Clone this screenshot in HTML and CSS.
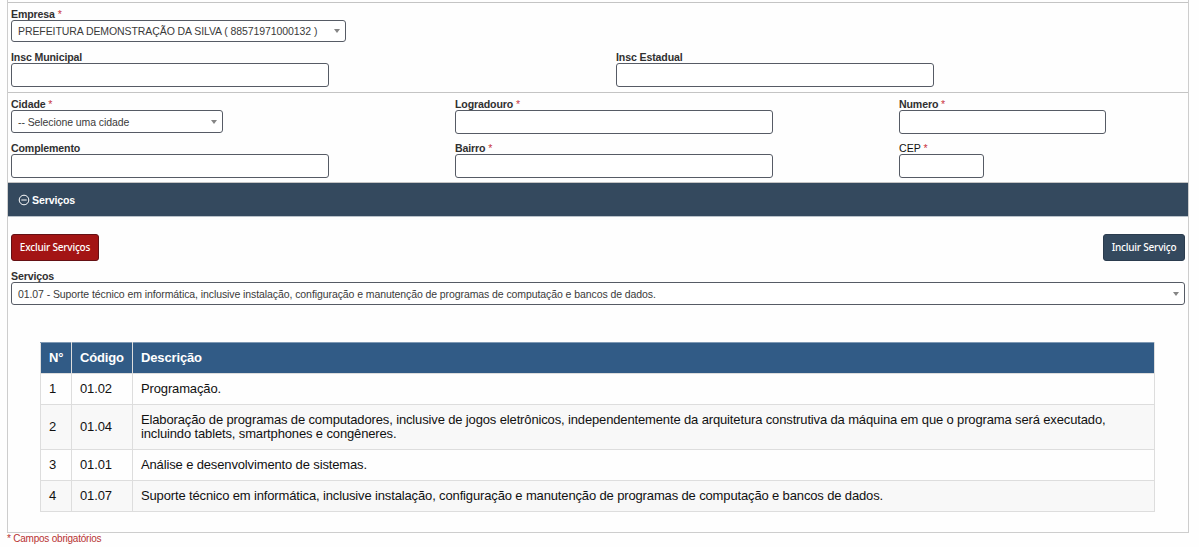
FILE: index.html
```html
<!DOCTYPE html>
<html lang="pt-BR">
<head>
<meta charset="utf-8">
<title>Serviços</title>
<link rel="stylesheet" href="styles.css">
</head>
<body>
<main class="panel">
  <section class="company">
    <div class="field company-name">
      <label class="label">Empresa <span class="req">*</span></label>
      <div class="select select-company"><span>PREFEITURA DEMONSTRAÇÃO DA SILVA ( 88571971000132 )</span><i class="arrow"></i></div>
    </div>
    <div class="halves">
      <div class="field"><label class="label">Insc Municipal</label><input class="input" type="text"></div>
      <div class="field"><label class="label">Insc Estadual</label><input class="input" type="text"></div>
    </div>
  </section>
  <section class="address">
    <div class="field"><label class="label">Cidade <span class="req">*</span></label>
      <div class="select select-city"><span>-- Selecione uma cidade</span><i class="arrow"></i></div></div>
    <div class="field"><label class="label">Logradouro <span class="req">*</span></label><input class="input" type="text"></div>
    <div class="field"><label class="label">Numero <span class="req">*</span></label><input class="input input-number" type="text"></div>
    <div class="field"><label class="label">Complemento</label><input class="input" type="text"></div>
    <div class="field"><label class="label">Bairro <span class="req">*</span></label><input class="input" type="text"></div>
    <div class="field"><label class="label label-light">CEP <span class="req">*</span></label><input class="input input-zip" type="text"></div>
  </section>
  <h2 class="section-title">
    <svg class="minus" viewBox="0 0 12 12"><circle cx="6" cy="6" r="4.8"/><path d="M3.3 6h5.4"/></svg>
    <span>Serviços</span>
  </h2>
  <section class="services">
    <div class="actions">
      <button class="btn btn-danger">Excluir Serviços</button>
      <button class="btn btn-primary">Incluir Serviço</button>
    </div>
    <div class="field service">
      <label class="label">Serviços</label>
      <div class="select"><span>01.07 - Suporte técnico em informática, inclusive instalação, configuração e manutenção de programas de computação e bancos de dados.</span><i class="arrow"></i></div>
    </div>
    <table class="table">
      <colgroup><col class="c-num"><col class="c-code"><col></colgroup>
      <thead><tr><th>N°</th><th>Código</th><th>Descrição</th></tr></thead>
      <tbody>
        <tr><td>1</td><td>01.02</td><td>Programação.</td></tr>
        <tr class="tall"><td>2</td><td>01.04</td><td>Elaboração de programas de computadores, inclusive de jogos eletrônicos, independentemente da arquitetura construtiva da máquina em que o programa será executado,<br>incluindo tablets, smartphones e congêneres.</td></tr>
        <tr><td>3</td><td>01.01</td><td>Análise e desenvolvimento de sistemas.</td></tr>
        <tr><td>4</td><td>01.07</td><td>Suporte técnico em informática, inclusive instalação, configuração e manutenção de programas de computação e bancos de dados.</td></tr>
      </tbody>
    </table>
  </section>
</main>
<p class="note">* Campos obrigatórios</p>
</body>
</html>
```

FILE: styles.css
```css
* { box-sizing: border-box; }
body {
  margin: 0;
  height: 547px;
  overflow: hidden;
  background: #fefefe;
  color: #333;
  font: 10.5px/12px "Liberation Sans", Arial, sans-serif;
}
.panel {
  width: 1182px;
  height: 533px;
  margin-left: 7px;
  padding-top: 2px;
  border: solid #cdcdcd;
  border-width: 0 1px 1px;
}
.company { height: 90px; padding: 5px 3px 0; border-top: 1px solid #c4c4c4; }
.company-name { height: 43px; }
.field { display: flex; flex-direction: column; align-items: flex-start; }
.label {
  height: 12px;
  color: #303030;
  font-weight: bold;
  font-size: 10.6px;
  letter-spacing: -0.13px;
  white-space: nowrap;
}
.label-light { font-weight: normal; color: #111; letter-spacing: 0; }
.req { color: #c9343d; font-weight: normal; }
.input {
  width: 318px;
  height: 24px;
  padding: 0 6px;
  border: 1px solid #565b65;
  border-radius: 3px;
  background: #fff;
}
.input-number { width: 207px; }
.input-zip { width: 85px; }
.select {
  display: flex;
  justify-content: space-between;
  align-items: center;
  width: 100%;
  height: 23px;
  padding: 0 5px 0 6px;
  border: 1px solid #565b65;
  border-radius: 3px;
  background: #fff;
  color: #3a3a3a;
  letter-spacing: -0.085px;
  white-space: nowrap;
}
.select-company { width: 335px; height: 22px; }
.select-city { width: 212px; }
.arrow { border: solid transparent; border-width: 4px 3px 0; border-top-color: #858585; }
.halves { display: grid; grid-template-columns: 605px 1fr; }
.address {
  display: grid;
  grid-template-columns: 444px 444px 1fr;
  grid-template-rows: 44px 40px;
  height: 91px;
  padding: 5px 3px 0;
  border: solid #c4c4c4;
  border-width: 1px 0;
}
.section-title {
  display: flex;
  align-items: center;
  gap: 2px;
  height: 34px;
  margin: 0;
  padding-left: 10px;
  border-bottom: 1px solid #b9c2ca;
  background: #34495e;
  color: #fff;
  font-size: 10.6px;
  letter-spacing: -0.13px;
}
.minus { width: 12px; height: 12px; fill: none; stroke: #fff; stroke-width: 1; }
.services { padding: 17px 3px 0; }
.actions { display: flex; justify-content: space-between; }
.btn {
  height: 27px;
  padding: 0 0 1px;
  border: 1px solid #2b3c4e;
  border-radius: 3px;
  color: #fff;
  font: 500 10px "Noto Sans", sans-serif;
  letter-spacing: -0.2px;
}
.btn-danger { width: 88px; background: #a31414; border-color: #651014; }
.btn-primary { width: 82px; background: #34495e; }
.service { margin-top: 9px; }
.table {
  width: 1115px;
  margin: 37px 0 0 29px;
  border-collapse: collapse;
  table-layout: fixed;
  color: #111;
  font-size: 13px;
  line-height: 14.5px;
  letter-spacing: -0.14px;
}
.c-num { width: 31px; }
.c-code { width: 61px; }
.table tr { height: 31px; }
.table .tall { height: 45px; }
.table th, .table td { padding: 0 8px; border: 1px solid #ddd; text-align: left; white-space: nowrap; }
.table th { background: #315b86; color: #fff; border-top-color: #7f99b4; }
.table tbody tr:nth-child(even) { background: #f8f8f8; }
.note { margin: 0 0 0 7px; color: #b83232; font-size: 10px; letter-spacing: -0.22px; }
```
